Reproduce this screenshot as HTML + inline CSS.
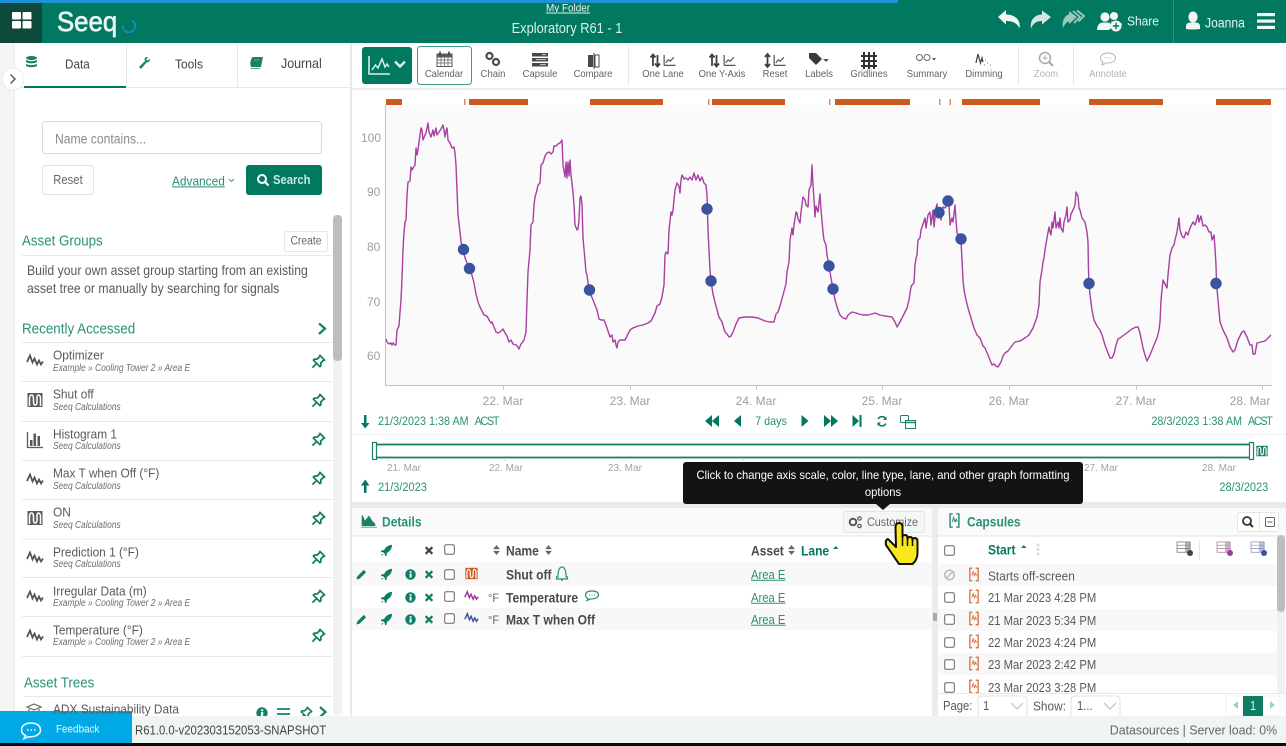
<!DOCTYPE html>
<html><head><meta charset="utf-8"><title>Seeq</title>
<style>
html,body{margin:0;padding:0;width:1286px;height:746px;overflow:hidden;background:#fff;font-family:"Liberation Sans",sans-serif;color:#555}
#s{position:absolute;left:0;top:0}
.t,.c,.r{position:absolute;white-space:pre;line-height:1;font-size:13px}
.t{transform:translateY(-50%) scaleX(.9);transform-origin:0 50%}
.c{transform:translate(-50%,-50%) scaleX(.9)}
.r{transform:translateY(-50%) scaleX(.9);transform-origin:100% 50%}
.g{color:#007960}.lg{color:#2a9078}.b{font-weight:bold}
.tb{font-size:10.5px;color:#5f6468}
.ax{font-size:12px;color:#9aa0a3;transform:translate(-50%,-50%)}
.ya{font-size:12px;color:#9aa0a3;transform:translateY(-50%)}
.tr{font-size:10px;color:#a0a4a6;transform:translateY(-50%)}
.n{font-size:13.2px;color:#5a5a5a}
.d{font-size:12.5px}
.bn{font-size:13.4px;color:#4a4a4a}
.sub{font-size:10px;font-style:italic;color:#6d6d6d;transform:translateY(-50%) scaleX(.84)}
.u{text-decoration:underline}
.ac{letter-spacing:-1.5px}
#tip{position:absolute;left:683px;top:462px;width:400px;height:42px;background:#131313;border-radius:3px}
#tipa{position:absolute;left:876px;top:504px;width:0;height:0;border:7px solid transparent;border-top:6px solid #131313;border-bottom:0}
#tip div{position:absolute;left:-50px;width:500px;text-align:center;color:#fff;font-size:12px;line-height:1;white-space:nowrap;transform:scaleX(.935)}
#hand{position:absolute;left:880px;top:518px}
</style></head><body>
<svg id="s" width="1286" height="746" viewBox="0 0 1286 746" xmlns="http://www.w3.org/2000/svg">
<defs>
<symbol id="sig" viewBox="0 0 18 14"><path d="M1 9 4 2.5 6.5 9.5 8.5 5.5 11 11.5 13 7.5 15 11.5 17 8.5" fill="none" stroke="currentColor" stroke-width="1.8"/></symbol>
<symbol id="cap" viewBox="0 0 16 16"><rect x="0.5" y="1" width="15" height="14" fill="currentColor"/><path d="M2.5 14V7Q2.5 3 4.5 3T6.500 7V10Q6.500 13 8.200 13T10 10V6Q10 3 11.500 3T13.500 6V14" fill="none" stroke="#fff" stroke-width="1.500"/></symbol>
<symbol id="brk" viewBox="0 0 12 17"><path d="M4 1H1V16H4M8 1H11V16H8" fill="none" stroke="currentColor" stroke-width="1.5"/><path d="M3.5 10 5 5 6.5 10 8 7 9 10" fill="none" stroke="currentColor" stroke-width="1"/></symbol>
<symbol id="pin" viewBox="0 0 16 16"><path d="M9.5 1.5 14.5 6.5 13 7 10.5 9.5 10.5 12.5 9.5 13.5 2.5 6.5 3.5 5.5 6.5 5.5 9 3ZM5.5 10.5 1.5 14.5" fill="none" stroke="currentColor" stroke-width="1.9" stroke-linejoin="round"/></symbol>
<symbol id="rkt" viewBox="0 0 14 14"><path d="M13 1C8.5 1.2 6 3.5 4.5 6.5L1.5 7 .8 8.5 3.5 9 5 10.5 5.5 13.2 7 12.5 7.5 9.5C10.5 8 12.8 5.5 13 1ZM2.5 10.5 1 13 3.5 11.5Z" fill="currentColor"/></symbol>
<symbol id="inf" viewBox="0 0 12 12"><circle cx="6" cy="6" r="5.7" fill="currentColor"/><rect x="5" y="5" width="2.2" height="4.4" fill="#fff"/><rect x="5" y="2.4" width="2.2" height="1.7" fill="#fff"/></symbol>
<symbol id="xx" viewBox="0 0 10 10"><path d="M1.3 1.3 8.7 8.7M8.7 1.3 1.3 8.7" stroke="currentColor" stroke-width="2.5" fill="none"/></symbol>
<symbol id="pen" viewBox="0 0 12 12"><path d="M8.5 1 11 3.5 3.8 10.7.6 11.4 1.3 8.2Z" fill="currentColor"/></symbol>
<symbol id="cb" viewBox="0 0 11 11"><rect x=".7" y=".7" width="9.6" height="9.6" rx="1.5" fill="#fff" stroke="#666" stroke-width="1"/></symbol>
<symbol id="tr" viewBox="0 0 18 16"><path d="M3 14H17M3 1V14M5 11 8 7 10.5 9 15 4" fill="none" stroke="currentColor" stroke-width="1.5"/></symbol>
<symbol id="sort" viewBox="0 0 8 12"><path d="M4 0 8 5H0ZM4 12 0 7H8Z" fill="currentColor"/></symbol>
<symbol id="tadd" viewBox="0 0 18 16"><rect x=".5" y="1" width="14" height="11" fill="#fff" stroke="currentColor" stroke-width=".8"/><rect x="9" y="1" width="5.5" height="11" fill="currentColor" opacity=".55"/><path d="M.5 4.5H14M.5 8H14" stroke="currentColor" stroke-width=".7"/></symbol>
</defs>

<!-- header -->
<rect width="1286" height="43" fill="#007960"/>
<rect y="0" width="898" height="3" fill="#1e90d6"/>
<rect y="3" width="42" height="40" fill="#0e4a3b"/>
<g fill="#fff"><rect x="12" y="12" width="9" height="7.5" rx="1"/><rect x="22.5" y="12" width="9" height="7.5" rx="1"/><rect x="12" y="21" width="9" height="7.5" rx="1"/><rect x="22.5" y="21" width="9" height="7.5" rx="1"/></g>
<circle cx="129" cy="26" r="6.300" fill="none" stroke="#1d8fc4" stroke-width="1.500" stroke-dasharray="27 13" transform="rotate(-60 129 26)"/>
<path d="M1173.5 0V43" stroke="#2f9180" stroke-width="1"/>
<!-- undo/redo -->
<path d="M998 17 1006 10V14.500C1015 14.500 1021 20 1019.500 28.500 1017.500 23.500 1013 21 1006 21V24.500Z" fill="#f2f7f5"/>
<path d="M1051 17 1042 10.500V14.500C1035 14.500 1029.500 20 1031 28.500 1033 23.500 1036.500 21 1042 21V24.500Z" fill="#d5e6e0"/>
<path d="M1077 17 1069 11V14.500C1066 14.500 1061.500 20 1063 28 1065 23.500 1067 21.500 1069 21.500V24Z" fill="#9fc7bc"/>
<path d="M1073 11 1080 17 1074 23M1077 10.500 1084 16 1078.500 21.500" fill="none" stroke="#9fc7bc" stroke-width="1.800"/>
<!-- share -->
<g fill="#f2f7f5"><circle cx="1105" cy="17" r="4.6"/><path d="M1097 30Q1097 23 1103 22.500H1108Q1112 23 1112 27L1109 30Z"/><circle cx="1114" cy="16" r="4"/><path d="M1111 21.500H1118Q1122 23 1122 25L1117 23 1112 24Z"/></g>
<circle cx="1116" cy="26" r="5.500" fill="#f2f7f5"/><path d="M1116 22.800V29.200M1112.800 26H1119.200" stroke="#007960" stroke-width="1.400"/>
<!-- user -->
<g fill="#f2f7f5"><ellipse cx="1193" cy="17" rx="4.600" ry="5.500"/><path d="M1186 29V26Q1186 23 1190 22.500H1196Q1200 23 1200 26V29Q1193 30 1186 29Z"/></g>
<g fill="#f2f7f5"><rect x="1257" y="13" width="18" height="3.200"/><rect x="1257" y="19.500" width="18" height="3.200"/><rect x="1257" y="25.800" width="18" height="3.200"/></g>

<!-- sidebar bg -->
<rect y="43" width="14" height="673" fill="#f3f5f5"/>
<rect x="14" y="43" width="1" height="673" fill="#e9ecec"/>
<rect x="350" y="43" width="2" height="673" fill="#e8eaea"/>
<path d="M126.500 44V87M237.500 44V87" stroke="#e8e8e8"/>
<path d="M15 87.500H350" stroke="#e8e8e8" stroke-width="1"/>
<rect x="24" y="86" width="102" height="2" fill="#007960"/>
<g fill="#1a8069"><ellipse cx="31.500" cy="58" rx="5.500" ry="2"/><path d="M26 60Q31.500 62.500 37 60V62.300Q31.500 64.500 26 62.300ZM26 64Q31.500 66.300 37 64V66Q31.500 68.500 26 66Z"/></g>
<path d="M139 67 145 61Q143.500 57.500 147 57L148 57.500 146 60 148 60.500 150 58.500Q150.500 62 146.500 62.500L141 69Z" fill="#1a8069"/>
<path d="M252.500 57H263L261 67H251Q249 62 252.500 57Z" fill="#1a8069"/><path d="M250.500 68.500H260" stroke="#6aa998" stroke-width="1.200"/><path d="M254 60H259" stroke="#6aa998"/>
<circle cx="13" cy="79" r="11" fill="#fff" stroke="#eaeaea"/>
<path d="M10.500 74.500 15 79 10.500 83.500" fill="none" stroke="#555" stroke-width="1.400"/>
<!-- search box -->
<rect x="42.500" y="121.500" width="279" height="32" rx="3" fill="#fff" stroke="#d8d8d8"/>
<rect x="42.500" y="165.500" width="51" height="29" rx="3" fill="#fff" stroke="#e2e2e2"/>
<rect x="246" y="165" width="76" height="30" rx="3" fill="#007960"/>
<circle cx="262" cy="179" r="4" fill="none" stroke="#fff" stroke-width="2"/><path d="M265 182 268.500 185.500" stroke="#fff" stroke-width="2.200"/>
<path d="M229 179 231.500 181.500 234 179" fill="none" stroke="#4a9d8b" stroke-width="1"/>
<!-- create -->
<rect x="284.500" y="231.500" width="43" height="20" rx="2" fill="#fff" stroke="#e6e6e6"/>
<path d="M22 255.500H332M22 342.500H332M22 381.500H332M22 421.500H332M22 460.500H332M22 499.500H332M22 539H332M22 577.500H332M22 616.500H332M22 656.500H332M24 696.500H332" stroke="#e8e8e8"/>
<path d="M319 323.500 325 328.500 319 334" fill="none" stroke="#15806a" stroke-width="2.300"/>
<rect x="333" y="215" width="9" height="500" rx="4" fill="#f1f1f1"/>
<rect x="333" y="215" width="9" height="146" rx="4" fill="#bdbdbd"/>
<g color="#555">
<use href="#sig" x="26" y="353" width="18" height="14"/>
<use href="#cap" x="27" y="392" width="16" height="16" color="#5a5a5a"/>
<path d="M27.500 432V447.500H43" fill="none" stroke="#5a5a5a" stroke-width="1.300"/><path d="M30 440H32.500V446H30ZM33.500 433.500H36V446H33.500ZM37.500 436H40V446H37.500Z" fill="#5a5a5a"/>
<use href="#sig" x="26" y="472" width="18" height="14"/>
<use href="#cap" x="27" y="510" width="16" height="16" color="#5a5a5a"/>
<use href="#sig" x="26" y="550" width="18" height="14"/>
<use href="#sig" x="26" y="589" width="18" height="14"/>
<use href="#sig" x="26" y="628" width="18" height="14"/>
</g>
<g color="#15806a">
<use href="#pin" x="311" y="354" width="15" height="15"/>
<use href="#pin" x="311" y="393" width="15" height="15"/>
<use href="#pin" x="311" y="432" width="15" height="15"/>
<use href="#pin" x="311" y="471" width="15" height="15"/>
<use href="#pin" x="311" y="511" width="15" height="15"/>
<use href="#pin" x="311" y="550" width="15" height="15"/>
<use href="#pin" x="311" y="589" width="15" height="15"/>
<use href="#pin" x="311" y="628" width="15" height="15"/>
<use href="#inf" x="256" y="707" width="12" height="12"/>
<use href="#pin" x="299" y="706" width="14" height="14"/>
</g>
<path d="M277 709H290M277 714H290" stroke="#15806a" stroke-width="1.800"/>
<path d="M320 707 325.500 712 320 717" fill="none" stroke="#15806a" stroke-width="2.200"/>
<path d="M27 707 34 704 41 707 34 710ZM29 709V713L34 716 39 713V709" fill="none" stroke="#666" stroke-width="1.200"/>

<!-- toolbar -->
<rect x="352" y="88" width="934" height="2" fill="#ececec"/>
<rect x="362" y="47" width="50" height="37" rx="3" fill="#007960"/>
<path d="M369 56V74H390" fill="none" stroke="#d8efe9" stroke-width="1.600"/>
<path d="M372 70 375.500 65 378 68 382 59 385 67 387 64 389 67" fill="none" stroke="#d8efe9" stroke-width="1.500"/>
<path d="M395 61.500 400 66.500 405 61.500" fill="none" stroke="#d8efe9" stroke-width="2.400"/>
<rect x="417.500" y="46.500" width="54" height="38" rx="3" fill="#fff" stroke="#3f9a87" stroke-width="1"/>
<path d="M628.500 46V85M1018.500 46V85M1073.500 46V85" stroke="#e6e6e6"/>
<!-- calendar -->
<rect x="437" y="54" width="15" height="12.500" fill="#fff" stroke="#5a5a5a"/><rect x="437" y="54" width="15" height="3.500" fill="#5a5a5a"/>
<path d="M437 60H452M437 63H452M441 57V66M444.500 57V66M448 57V66" stroke="#7a7a7a" stroke-width=".9"/><path d="M440 51.500V55M449 51.500V55" stroke="#333" stroke-width="1.500"/>
<!-- chain -->
<g fill="none" stroke="#4a4a4a" stroke-width="2.200"><circle cx="489.500" cy="56" r="3"/><circle cx="496" cy="62" r="3"/></g>
<!-- capsule -->
<g fill="#484848"><rect x="532" y="53" width="16" height="3.500"/><rect x="532" y="58" width="16" height="3.500"/><rect x="532" y="63" width="16" height="3.500"/></g><path d="M542 54.700H546M536 59.700H546M540 64.700H546" stroke="#ddd" stroke-width=".8"/>
<!-- compare -->
<path d="M588 55H593V67H588Z" fill="#484848"/><path d="M595 55H599V67H595Z" fill="#fff" stroke="#484848"/><path d="M594 53V69" stroke="#484848"/>
<!-- lane icons -->
<g fill="none" stroke="#3f3f3f" stroke-width="1.800">
<path d="M653 66V55M650.500 57.500 653 54.500 655.500 57.500M657.500 55V66M655 63.500 657.500 66.500 660 63.500"/>
<path d="M712 66V55M709.500 57.500 712 54.500 714.500 57.500M716.500 55V66M714 63.500 716.500 66.500 719 63.500"/>
<path d="M767.500 54.500V66.500M765 57 767.500 54 770 57M765 64 767.500 67 770 64"/>
</g>
<use href="#tr" x="661" y="54" width="16" height="13" color="#555"/>
<use href="#tr" x="721" y="54" width="16" height="13" color="#555"/>
<use href="#tr" x="771" y="54" width="16" height="13" color="#555"/>
<!-- labels -->
<path d="M809 53H816L822 59 816 65 809 58Z" fill="#3a3a3a"/><path d="M823 59H829L826 62Z" fill="#555"/>
<!-- grid -->
<path d="M861 56H877M861 61H877M861 66H877M864 52V69M869 52V69M874 52V69" stroke="#333" stroke-width="2"/>
<!-- summary -->
<g fill="none" stroke="#666" stroke-width="1"><circle cx="919.500" cy="57.500" r="3"/><circle cx="927" cy="57.500" r="3"/></g><path d="M932 58H936L934 60.500Z" fill="#555"/>
<!-- dimming -->
<path d="M976 63 978 54 980.500 63 982 58 983 62" fill="none" stroke="#444" stroke-width="1.300"/><path d="M985 60 986 60M987 63 988 63M984 65 985 65M990 65 991 65" stroke="#777"/>
<!-- zoom -->
<circle cx="1045" cy="58" r="5.500" fill="none" stroke="#a9a9a9" stroke-width="1.500"/><path d="M1049 62 1053 66" stroke="#a9a9a9" stroke-width="2"/><path d="M1045 55.500V60.500M1042.500 58H1047.500" stroke="#a9a9a9"/>
<!-- annotate -->
<path d="M1108 53C1103 53 1100.500 55.500 1100.500 58 1100.500 60 1102 61.500 1103 62L1102 65 1106 63C1113 63.500 1115.500 60.500 1115.500 58 1115.500 55.500 1113 53 1108 53Z" fill="none" stroke="#b5b5b5"/><path d="M1104.500 58H1105.500M1107.500 58H1108.500M1110.500 58H1111.500" stroke="#b5b5b5"/>

<!-- capsule bars -->
<g fill="#cd5a20">
<rect x="386" y="99" width="16" height="6"/><rect x="464" y="99" width="1.500" height="6" opacity=".7"/><rect x="469" y="99" width="59" height="6"/><rect x="590" y="99" width="73" height="6"/><rect x="708" y="99" width="1.500" height="6" opacity=".7"/><rect x="712" y="99" width="73" height="6"/><rect x="829" y="99" width="1.500" height="6" opacity=".7"/><rect x="835" y="99" width="75" height="6"/><rect x="939" y="99" width="1.500" height="6" opacity=".7"/><rect x="949.500" y="99" width="1.500" height="6" opacity=".7"/><rect x="962" y="99" width="78" height="6"/><rect x="1089" y="99" width="74" height="6"/><rect x="1216" y="99" width="55" height="6"/>
</g>
<!-- plot -->
<rect x="386" y="105" width="886" height="280" fill="#fafafa"/>
<path d="M385.500 105V385.500H1272" fill="none" stroke="#b8c2d2" stroke-width="1"/>
<path d="M503.500 385V390M630.500 385V390M756.500 385V390M882.500 385V390M1009.500 385V390M1136.500 385V390M1262.500 385V390" stroke="#c5cdd9"/>
<path fill="none" stroke="#a83fa2" stroke-width="1.400" stroke-linejoin="round" d="M386 339 387 342 389 344 391 343 392 345 393 343 395 345 396 345 397 330 399 326 400 312 401 300 402 278 403 250 404 232 405 222 406 220 407 195 408 182 410 181 411 167 412 170 413 168 415 165 416 148 417 155 418 150 419 142 421 128 422 130 423 140 425 135 426 133 428 123 429 132 431 137 433 130 434 136 436 128 437 135 439 132 441 129 443 125 444 130 445 137 446 131 447 128 448 140 450 143 452 148 454 147 455 153 456 165 457 190 458 215 460 232 461 242 463 249 465 258 467 263 469 268 471 272 473 279 474 283 476 294 478 302 480 307 482 311 484 315 487 316 489 320 491 323 492 322 494 327 496 332 498 333 500 332 503 329 505 333 507 336 509 342 511 340 513 344 516 345 518 347 519 349 521 344 522 343 524 340 526 332 527 300 528 272 530 250 531 225 533 222 534 205 535 197 537 190 538 185 540 183 541 165 543 163 545 156 547 153 549 152 551 154 553 152 554 146 556 146 558 144 560 143 562 140 563 165 565 177 566 162 567 178 568 162 569 176 570 160 571 175 573 192 574 205 575 225 577 230 578 229 579 220 580 198 581 196 582 205 583 238 585 260 586 272 587 275 589 290 591 295 593 300 595 305 597 310 599 319 601 320 604 320 606 325 608 331 610 337 612 335 613 342 615 340 616 345 617 348 618 342 620 340 622 340 625 340 627 336 630 330 633 328 638 326 643 325 648 323 651 321 655 313 657 306 660 304 662 297 664 285 665 255 666 252 668 254 669 230 671 212 672 215 673 210 675 190 677 183 679 186 680 193 681 180 682 175 684 179 686 178 688 180 690 177 692 180 694 173 696 180 698 175 700 181 702 177 704 183 706 185 707 195 708 230 710 270 711 281 713 294 715 302 717 310 719 317 722 322 725 332 727 334 729 337 731 336 733 332 736 324 739 318 745 317 752 317 758 318 765 321 770 322 774 322 776 314 778 312 780 306 783 295 786 284 787 272 789 262 790 240 792 228 793 235 794 225 796 212 797 213 798 219 800 223 801 212 803 197 805 200 806 205 808 207 809 190 811 185 812 165 813 185 814 200 815 217 816 206 818 212 820 194 821 210 823 232 824 240 826 245 827 255 829 266 831 278 833 289 835 300 838 310 840 315 843 318 846 319 848 315 852 312 856 313 859 314 863 315 868 315 872 314 875 313 880 315 885 316 892 317 895 322 897 327 900 322 904 314 907 308 909 300 911 287 912 285 914 283 915 265 916 258 917 255 918 240 920 238 921 230 923 224 925 218 926 228 928 215 930 212 931 225 933 210 934 227 936 208 937 204 938 218 940 212 941 220 943 207 945 208 947 205 949 205 950 225 952 218 953 222 955 205 956 220 957 233 959 235 961 240 962 260 963 280 964 290 966 300 968 308 971 318 974 328 977 335 980 338 983 346 985 348 988 355 990 360 992 365 994 364 996 366 998 367 1001 362 1003 356 1005 353 1008 351 1011 347 1015 342 1020 341 1025 338 1029 335 1033 328 1037 317 1039 305 1040 282 1042 270 1043 262 1044 258 1045 250 1047 238 1049 227 1050 232 1051 235 1052 222 1053 228 1055 212 1056 228 1058 222 1059 228 1060 218 1061 228 1063 232 1064 222 1066 215 1067 207 1068 222 1070 220 1071 214 1073 210 1075 205 1076 192 1078 196 1079 208 1080 210 1082 218 1085 222 1087 232 1088 242 1088.500 270 1089 283 1090 295 1092 310 1094 320 1097 326 1100 330 1102 335 1105 345 1108 353 1110 358 1112 358 1114 354 1116 345 1118 339 1120 338 1124 335 1128 332 1132 329 1136 327 1138 327 1140 333 1143 348 1145 355 1147 361 1150 355 1154 345 1157 338 1159 330 1160 322 1161 300 1163 280 1165 284 1167 288 1168 275 1170 255 1172 248 1174 245 1175 240 1177 232 1179 218 1180 230 1182 236 1184 238 1186 232 1188 235 1190 228 1193 222 1195 225 1198 215 1199 222 1201 216 1203 226 1205 225 1207 227 1209 232 1211 232 1212 240 1214 235 1215 248 1216 265 1216.500 283 1218 300 1220 322 1223 330 1227 338 1230 347 1233 352 1235 350 1238 340 1242 332 1244 331 1247 337 1250 345 1252 345 1253 354 1255 354 1257 343 1261 342 1265 341 1268 338 1271 335"/>
<g fill="#3b539e">
<circle cx="463.500" cy="249.500" r="5.700"/><circle cx="469.500" cy="268.500" r="5.700"/><circle cx="589.500" cy="290" r="5.700"/><circle cx="707" cy="209" r="5.700"/><circle cx="711" cy="281" r="5.700"/><circle cx="829" cy="266" r="5.700"/><circle cx="833" cy="289" r="5.700"/><circle cx="939" cy="212.500" r="5.700"/><circle cx="948" cy="201" r="5.700"/><circle cx="961" cy="239" r="5.700"/><circle cx="1089" cy="283.500" r="5.700"/><circle cx="1216" cy="283.500" r="5.700"/>
</g>
<!-- time row -->
<g fill="#007960">
<path d="M364 415H366.500V423H369.500L365.200 428.500 361 423H364Z"/>
<path d="M364 493H366.500V485.500H369.500L365.200 479.500 361 485.500H364Z"/>
<path d="M705 421 712 415V427ZM712 421 719 415V427Z"/>
<path d="M734 421 741 415V427Z"/>
<path d="M808.500 421 801.500 415V427Z"/>
<path d="M824 415 831 421 824 427ZM831 415 838 421 831 427Z"/>
<path d="M859 421 852.500 415V427ZM859.500 415H861.500V427H859.500Z"/>
</g>
<path d="M886 419.500A4.200 4.200 0 0 0 878.200 419M878 423A4.200 4.200 0 0 0 885.800 423.500" fill="none" stroke="#007960" stroke-width="1.500"/><path d="M886.500 416.500V420H883ZM877.500 426V422.500H881Z" fill="#007960"/>
<rect x="900.500" y="415.500" width="8" height="7" rx="1" fill="#fff" stroke="#1a8069"/><rect x="905.500" y="420.500" width="10" height="8" fill="#fff" stroke="#1a8069"/><path d="M905.500 422.500H915.500" stroke="#1a8069" stroke-width="1.500"/>
<path d="M352 434.500H1286" stroke="#eeeeee"/>
<!-- trend bar -->
<rect x="373" y="444.500" width="879" height="13" fill="#fff" stroke="#1a8069" stroke-width="1.800"/>
<rect x="372.500" y="442.500" width="4" height="17" fill="#fff" stroke="#1a8069" stroke-width="1.200"/>
<rect x="1249.500" y="442.500" width="4" height="17" fill="#fff" stroke="#1a8069" stroke-width="1.200"/>
<use href="#cap" x="1256" y="444" width="12" height="14" color="#1a8069"/>
<path d="M387 458V461M505 458V461M624 458V461M743 458V461M861 458V461M1100 458V461M1219 458V461" stroke="#d5d5d5"/>
<!-- split -->
<rect x="352" y="502" width="934" height="6" fill="#e9e9e9"/>
<rect x="352" y="508" width="580" height="27" fill="#fafafa"/>
<rect x="352" y="535" width="580" height="2" fill="#f0f0f0"/>
<rect x="352" y="562" width="580" height="24" fill="#f8f8f8"/>
<rect x="352" y="608" width="580" height="22" fill="#f8f8f8"/>
<rect x="932" y="508" width="6" height="208" fill="#ececec"/>
<rect x="933" y="613" width="4" height="8" fill="#aaa"/>
<rect x="938" y="508" width="348" height="27" fill="#fafafa"/>
<rect x="938" y="535" width="348" height="2" fill="#f0f0f0"/>
<rect x="938" y="564" width="340" height="22" fill="#f8f8f8"/>
<rect x="938" y="609" width="340" height="22" fill="#f8f8f8"/>
<rect x="938" y="653" width="340" height="22" fill="#f8f8f8"/>
<rect x="1277" y="535" width="8" height="160" rx="4" fill="#f1f1f1"/>
<rect x="1277" y="535" width="8" height="77" rx="4" fill="#bdbdbd"/>
<path d="M362 526V515L365 521 369 516 372 521 375 524V526ZM361 527.500H377" fill="#1a8069" stroke="#1a8069" stroke-width=".6"/>
<use href="#brk" x="949" y="513" width="11" height="15" color="#1a8069"/>
<!-- customize -->
<rect x="843.500" y="511.500" width="81" height="21" rx="2" fill="#f5f6f6" stroke="#e6e6e6"/>
<circle cx="853" cy="522" r="3.300" fill="none" stroke="#555" stroke-width="2"/><circle cx="859.500" cy="518.500" r="1.700" fill="none" stroke="#555" stroke-width="1.200"/><circle cx="859.500" cy="526" r="1.700" fill="none" stroke="#555" stroke-width="1.200"/>
<!-- capsule buttons -->
<rect x="1237.500" y="512.500" width="41" height="19" rx="2" fill="#fff" stroke="#e6e6e6"/><path d="M1259.500 513V531" stroke="#e6e6e6"/>
<circle cx="1247" cy="521" r="4" fill="none" stroke="#333" stroke-width="1.800"/><path d="M1250 524 1253 527" stroke="#333" stroke-width="2"/>
<rect x="1265.500" y="517.500" width="9" height="9" rx="1" fill="none" stroke="#666"/><path d="M1267.500 522H1272.500" stroke="#666"/>
<!-- details rows icons -->
<g color="#0f7d66">
<use href="#rkt" x="380" y="544" width="13" height="13"/>
<use href="#rkt" x="380" y="568" width="13" height="13"/>
<use href="#rkt" x="380" y="591" width="13" height="13"/>
<use href="#rkt" x="380" y="613" width="13" height="13"/>
<use href="#pen" x="356" y="569" width="11" height="11"/>
<use href="#pen" x="356" y="614" width="11" height="11"/>
<use href="#inf" x="405" y="569" width="11" height="11"/>
<use href="#inf" x="405" y="592" width="11" height="11"/>
<use href="#inf" x="405" y="614" width="11" height="11"/>
<use href="#xx" x="424.500" y="570" width="9" height="9"/>
<use href="#xx" x="424.500" y="593" width="9" height="9"/>
<use href="#xx" x="424.500" y="615" width="9" height="9"/>
</g>
<use href="#xx" x="424.500" y="546" width="9" height="9" color="#444"/>
<use href="#cb" x="444" y="544" width="11" height="11"/><use href="#cb" x="444" y="569" width="11" height="11"/><use href="#cb" x="444" y="591" width="11" height="11"/><use href="#cb" x="444" y="613" width="11" height="11"/>
<use href="#cap" x="465" y="566" width="13" height="15" color="#cd5a20"/>
<use href="#sig" x="464" y="589" width="15" height="13" color="#a5389f"/>
<use href="#sig" x="464" y="611" width="15" height="13" color="#3b539e"/>
<use href="#sort" x="493" y="545" width="7" height="10" color="#666"/>
<use href="#sort" x="545" y="545" width="7" height="10" color="#666"/>
<use href="#sort" x="788" y="545" width="7" height="10" color="#666"/>
<path d="M833 549 838.500 549 835.800 546Z" fill="#0f7d66"/>
<path d="M558 577C557.500 572.500 559 567 562 567S566.500 572.500 566 577H567.500V579H556.500V577ZM561 580H563" fill="none" stroke="#2a9078" stroke-width="1.200"/>
<path d="M592 591C587 591 585.500 593 585.500 595 585.500 596.500 586.500 598 588 598.500L587 600.500 590.500 599C596 599 598.500 597 598.500 595S597 591 592 591Z" fill="none" stroke="#2a9078" stroke-width="1.200"/><path d="M589 595H590M591.500 595H592.500M594 595H595" stroke="#2a9078"/>
<!-- capsules rows -->
<use href="#cb" x="944" y="545" width="11" height="11"/>
<path d="M1021 548 1026.500 548 1023.800 545Z" fill="#0f7d66"/>
<g fill="#d8d8d8"><circle cx="1038" cy="545" r="1.500"/><circle cx="1038" cy="549.500" r="1.500"/><circle cx="1038" cy="554" r="1.500"/></g>
<circle cx="949.500" cy="575" r="4.700" fill="none" stroke="#bbb" stroke-width="1.500"/><path d="M946.500 578 952.500 572" stroke="#bbb" stroke-width="1.500"/>
<use href="#cb" x="944" y="592" width="11" height="11"/><use href="#cb" x="944" y="614" width="11" height="11"/><use href="#cb" x="944" y="637" width="11" height="11"/><use href="#cb" x="944" y="659" width="11" height="11"/><use href="#cb" x="944" y="682" width="11" height="11"/>
<g color="#d66a33">
<use href="#brk" x="969" y="567" width="10" height="15"/><use href="#brk" x="969" y="589" width="10" height="15"/><use href="#brk" x="969" y="611" width="10" height="15"/><use href="#brk" x="969" y="634" width="10" height="15"/><use href="#brk" x="969" y="656" width="10" height="15"/><use href="#brk" x="969" y="679" width="10" height="15"/>
</g>
<use href="#tadd" x="1176" y="541" width="18" height="15" color="#777"/><circle cx="1190" cy="553" r="3" fill="#444"/>
<path d="M1199.500 541V560" stroke="#e5e5e5"/>
<use href="#tadd" x="1216" y="541" width="18" height="15" color="#a77ba5"/><circle cx="1230" cy="553" r="3" fill="#a5389f"/>
<use href="#tadd" x="1250" y="541" width="18" height="15" color="#8090b5"/><circle cx="1264" cy="553" r="3" fill="#3b539e"/>
<!-- pagination -->
<rect x="938" y="693" width="348" height="23" fill="#fff"/>
<path d="M938 693.500H1286" stroke="#e8e8e8"/>
<path d="M978 716V700Q978 696 982 696H1023Q1027 696 1027 700V716M1071 716V700Q1071 696 1075 696H1116Q1120 696 1120 700V716" fill="#fff" stroke="#e0e0e0"/>
<path d="M1011 703 1017 709 1023 703M1104 703 1110 709 1116 703" fill="none" stroke="#c5c5c5" stroke-width="1.300"/>
<path d="M1226 696H1280V716H1226Z" fill="#fff" stroke="#f0f0f0"/>
<rect x="1243" y="696" width="20" height="20" fill="#0f7d66"/>
<path d="M1233 701V709L1238 705Z" fill="#9fcfc3" transform="matrix(-1 0 0 1 2471 0)"/><path d="M1270 701V709L1275 705Z" fill="#9fcfc3"/>
<!-- footer -->
<rect y="716" width="1286" height="27" fill="#f1f4f4"/>
<rect y="711" width="132" height="32" fill="#00a8e6"/>
<rect y="743" width="1286" height="3" fill="#0a0a0a"/>
<path d="M31 723C25 723 21.500 726 21.500 730 21.500 732.500 23 734.500 25.500 735.500L24 738.500 28.500 736.800C35 737.300 40.500 734.500 40.500 730 40.500 726 37 723 31 723Z" fill="none" stroke="#fff" stroke-width="1.500"/><path d="M27 730H28.500M30.500 730H32M34 730H35.500" stroke="#fff" stroke-width="1.500"/>
</svg>

<!-- header text -->
<div class="t" style="left:56.500px;top:22px;font-size:28px;color:#eaf6f2;-webkit-text-stroke:.7px #eaf6f2;transform:translateY(-50%) scaleX(.92)">Seeq</div>
<div class="c u" style="left:568px;top:8.500px;font-size:11px;color:#e6f3ef">My Folder</div>
<div class="c" style="left:567px;top:29px;font-size:14.300px;color:#dcefe9">Exploratory R61 - 1</div>
<div class="t" style="left:1127px;top:21px;font-size:13.300px;color:#e8f3f0">Share</div>
<div class="t" style="left:1205px;top:23px;font-size:13.500px;color:#e8f3f0">Joanna</div>
<!-- tabs -->
<div class="t" style="left:65px;top:64px;color:#444">Data</div>
<div class="t" style="left:175px;top:64px;font-size:13.300px;color:#444">Tools</div>
<div class="t" style="left:281px;top:64px;font-size:13.800px;color:#444">Journal</div>
<div class="t" style="left:55px;top:138.500px;font-size:13.500px;color:#8a8a8a">Name contains...</div>
<div class="c" style="left:68px;top:179.500px;font-size:12.500px;color:#666">Reset</div>
<div class="t u lg" style="left:172px;top:180.500px;font-size:13.200px">Advanced</div>
<div class="t b" style="left:273px;top:179.500px;font-size:12.500px;color:#cfe6e0">Search</div>
<!-- sidebar -->
<div class="t lg" style="left:22px;top:242px;font-size:14.800px">Asset Groups</div>
<div class="c" style="left:305.500px;top:241.500px;font-size:11.500px;color:#666">Create</div>
<div class="t n" style="left:27px;top:270.500px;font-size:13.600px">Build your own asset group starting from an existing</div>
<div class="t n" style="left:27px;top:288.500px;font-size:13.600px">asset tree or manually by searching for signals</div>
<div class="t lg" style="left:22px;top:330px;font-size:14.900px">Recently Accessed</div>
<div class="t n" style="left:53px;top:355px">Optimizer</div><div class="t sub" style="left:53px;top:369px">Example » Cooling Tower 2 » Area E</div>
<div class="t n" style="left:53px;top:394px">Shut off</div><div class="t sub" style="left:53px;top:408px">Seeq Calculations</div>
<div class="t n" style="left:53px;top:434px">Histogram 1</div><div class="t sub" style="left:53px;top:447px">Seeq Calculations</div>
<div class="t n" style="left:53px;top:472.500px">Max T when Off (°F)</div><div class="t sub" style="left:53px;top:487px">Seeq Calculations</div>
<div class="t n" style="left:53px;top:511.500px">ON</div><div class="t sub" style="left:53px;top:525.500px">Seeq Calculations</div>
<div class="t n" style="left:53px;top:551.500px">Prediction 1 (°F)</div><div class="t sub" style="left:53px;top:565px">Seeq Calculations</div>
<div class="t n" style="left:53px;top:590.500px">Irregular Data (m)</div><div class="t sub" style="left:53px;top:604px">Example » Cooling Tower 2 » Area E</div>
<div class="t n" style="left:53px;top:629.500px">Temperature (°F)</div><div class="t sub" style="left:53px;top:643px">Example » Cooling Tower 2 » Area E</div>
<div class="t lg" style="left:24px;top:684px;font-size:14.800px">Asset Trees</div>
<div class="t n" style="left:53px;top:708.500px">ADX Sustainability Data</div>
<!-- toolbar labels -->
<div class="c tb" style="left:444px;top:73.500px">Calendar</div>
<div class="c tb" style="left:493px;top:73.500px">Chain</div>
<div class="c tb" style="left:539.500px;top:73.500px">Capsule</div>
<div class="c tb" style="left:593px;top:73.500px">Compare</div>
<div class="c tb" style="left:663px;top:73.500px">One Lane</div>
<div class="c tb" style="left:722px;top:73.500px">One Y-Axis</div>
<div class="c tb" style="left:775px;top:73.500px">Reset</div>
<div class="c tb" style="left:819px;top:73.500px">Labels</div>
<div class="c tb" style="left:869px;top:73.500px">Gridlines</div>
<div class="c tb" style="left:926.500px;top:73.500px">Summary</div>
<div class="c tb" style="left:984px;top:73.500px">Dimming</div>
<div class="c tb" style="left:1046px;top:73.500px;color:#b3b3b3">Zoom</div>
<div class="c tb" style="left:1108px;top:73.500px;color:#b3b3b3">Annotate</div>
<!-- axes -->
<div class="t ya" style="left:361px;top:137.500px">100</div>
<div class="t ya" style="left:367px;top:191.500px">90</div>
<div class="t ya" style="left:367px;top:246.500px">80</div>
<div class="t ya" style="left:367px;top:301.500px">70</div>
<div class="t ya" style="left:367px;top:355.500px">60</div>
<div class="c ax" style="left:503px;top:400.500px">22. Mar</div>
<div class="c ax" style="left:630px;top:400.500px">23. Mar</div>
<div class="c ax" style="left:756px;top:400.500px">24. Mar</div>
<div class="c ax" style="left:882px;top:400.500px">25. Mar</div>
<div class="c ax" style="left:1009px;top:400.500px">26. Mar</div>
<div class="c ax" style="left:1136px;top:400.500px">27. Mar</div>
<div class="c ax" style="left:1250px;top:400.500px">28. Mar</div>
<!-- time -->
<div class="t lg" style="left:378px;top:421px;font-size:12px">21/3/2023 1:38 AM  <span class="ac">ACST</span></div>
<div class="c lg" style="left:771px;top:421px;font-size:12px">7 days</div>
<div class="r lg" style="right:15px;top:421px;font-size:12px">28/3/2023 1:38 AM  <span class="ac">ACST</span></div>
<div class="t tr" style="left:387px;top:468.500px">21. Mar</div>
<div class="t tr" style="left:489px;top:468.500px">22. Mar</div>
<div class="t tr" style="left:608px;top:468.500px">23. Mar</div>
<div class="t tr" style="left:1084px;top:468.500px">27. Mar</div>
<div class="t tr" style="left:1202px;top:468.500px">28. Mar</div>
<div class="t lg" style="left:378px;top:487px;font-size:12.200px">21/3/2023</div>
<div class="r lg" style="right:18px;top:487px;font-size:12.200px">28/3/2023</div>
<!-- details -->
<div class="t b lg" style="left:382px;top:521.500px;font-size:13.400px">Details</div>
<div class="t" style="left:867px;top:522px;font-size:12px;color:#666">Customize</div>
<div class="t b bn" style="left:506px;top:550.500px">Name</div>
<div class="t b bn" style="left:751px;top:550.500px">Asset</div>
<div class="t b g" style="left:801px;top:550.500px;font-size:13.400px">Lane</div>
<div class="t b bn" style="left:506px;top:574.500px">Shut off</div>
<div class="t b bn" style="left:506px;top:597.500px">Temperature</div>
<div class="t b bn" style="left:506px;top:619.500px">Max T when Off</div>
<div class="t" style="left:488px;top:597.500px;font-size:12px;color:#666">°F</div>
<div class="t" style="left:488px;top:619.500px;font-size:12px;color:#666">°F</div>
<div class="t u lg" style="left:751px;top:574.500px;font-size:12.500px">Area E</div>
<div class="t u lg" style="left:751px;top:597.500px;font-size:12.500px">Area E</div>
<div class="t u lg" style="left:751px;top:619.500px;font-size:12.500px">Area E</div>
<!-- capsules -->
<div class="t b lg" style="left:967px;top:521.500px;font-size:13.400px">Capsules</div>
<div class="t b g" style="left:988px;top:549.500px;font-size:13.400px">Start</div>
<div class="t n" style="left:988px;top:575.500px">Starts off-screen</div>
<div class="t n d" style="left:988px;top:598px">21 Mar 2023 4:28 PM</div>
<div class="t n d" style="left:988px;top:620.500px">21 Mar 2023 5:34 PM</div>
<div class="t n d" style="left:988px;top:643px">22 Mar 2023 4:24 PM</div>
<div class="t n d" style="left:988px;top:665px">23 Mar 2023 2:42 PM</div>
<div class="t n d" style="left:988px;top:688px">23 Mar 2023 3:28 PM</div>
<div class="t n d" style="left:943px;top:706px">Page:</div>
<div class="t n d" style="left:983px;top:706px">1</div>
<div class="t n" style="left:1033px;top:706px">Show:</div>
<div class="t n d" style="left:1077px;top:706px">1...</div>
<div class="c" style="left:1253px;top:706px;font-size:12.500px;color:#e6f3ef">1</div>
<!-- footer -->
<div class="t" style="left:56px;top:730px;font-size:11px;color:#eaf7fc">Feedback</div>
<div class="t" style="left:135px;top:730px;font-size:13px;color:#444;transform:translateY(-50%) scaleX(.873)">R61.0.0-v202303152053-SNAPSHOT</div>
<div class="r" style="right:9px;top:730px;font-size:13px;color:#666;transform:translateY(-50%) scaleX(.95)">Datasources | Server load: 0%</div>
<!-- tooltip -->
<div id="tip"><div style="top:7px">Click to change axis scale, color, line type, lane, and other graph formatting</div><div style="top:24px">options</div></div>
<div id="tipa"></div>
<!-- cursor -->
<svg id="hand" width="42" height="50" viewBox="0 0 42 50" xmlns="http://www.w3.org/2000/svg"><path d="M8 21 16 29 15.500 9Q15.500 5 19 5T22.500 9V19Q22.500 17 25 17T27.500 20V21Q27.500 19 30 19T32.500 22Q32.500 20 35 20T37.500 24V35Q37.500 40 34.500 44L32.500 46H19L6 27Q5 22 8 21Z" fill="#f8e71c" stroke="#111" stroke-width="2" stroke-linejoin="round"/><path d="M22.500 19V28M27.500 21V28M32.500 22V28" stroke="#111" stroke-width="1.500"/></svg>
</body></html>
